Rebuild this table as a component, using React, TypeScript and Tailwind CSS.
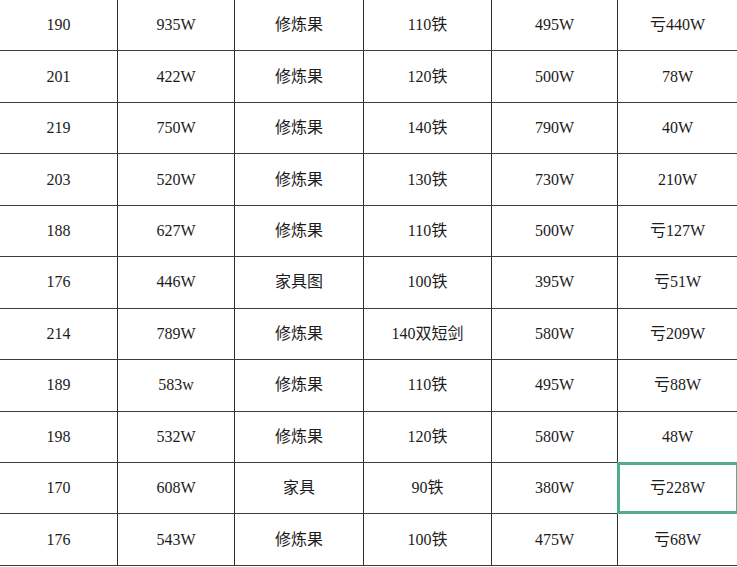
const rows: string[][] = [
  ['190', '935W', '修炼果', '110铁', '495W', '亏440W'],
  ['201', '422W', '修炼果', '120铁', '500W', '78W'],
  ['219', '750W', '修炼果', '140铁', '790W', '40W'],
  ['203', '520W', '修炼果', '130铁', '730W', '210W'],
  ['188', '627W', '修炼果', '110铁', '500W', '亏127W'],
  ['176', '446W', '家具图', '100铁', '395W', '亏51W'],
  ['214', '789W', '修炼果', '140双短剑', '580W', '亏209W'],
  ['189', '583w', '修炼果', '110铁', '495W', '亏88W'],
  ['198', '532W', '修炼果', '120铁', '580W', '48W'],
  ['170', '608W', '家具', '90铁', '380W', '亏228W'],
  ['176', '543W', '修炼果', '100铁', '475W', '亏68W'],
];

export default function App() {
  return (
    <div
      className="w-[737px] h-[567px] overflow-hidden bg-white text-[16px] text-[#1c1c1c]"
      style={{ fontFamily: '"Liberation Serif", "Noto Sans CJK SC", serif' }}
    >
      {rows.map((r, i) => (
        <div
          key={i}
          className="grid grid-cols-[118px_117px_129px_128px_126px_1fr] h-[51.45px] border-b border-[#3c3c3c]"
        >
          {r.map((c, j) => (
            <div
              key={j}
              className={`relative flex items-center justify-center ${j < 5 ? 'border-r border-[#2e2e2e]' : ''}`}
            >
              {c}
              {i === 9 && j === 5 && (
                <div className="absolute -left-px -top-px -bottom-px -right-[2px] border-[3px] border-[#52ad88]" />
              )}
            </div>
          ))}
        </div>
      ))}
    </div>
  );
}
